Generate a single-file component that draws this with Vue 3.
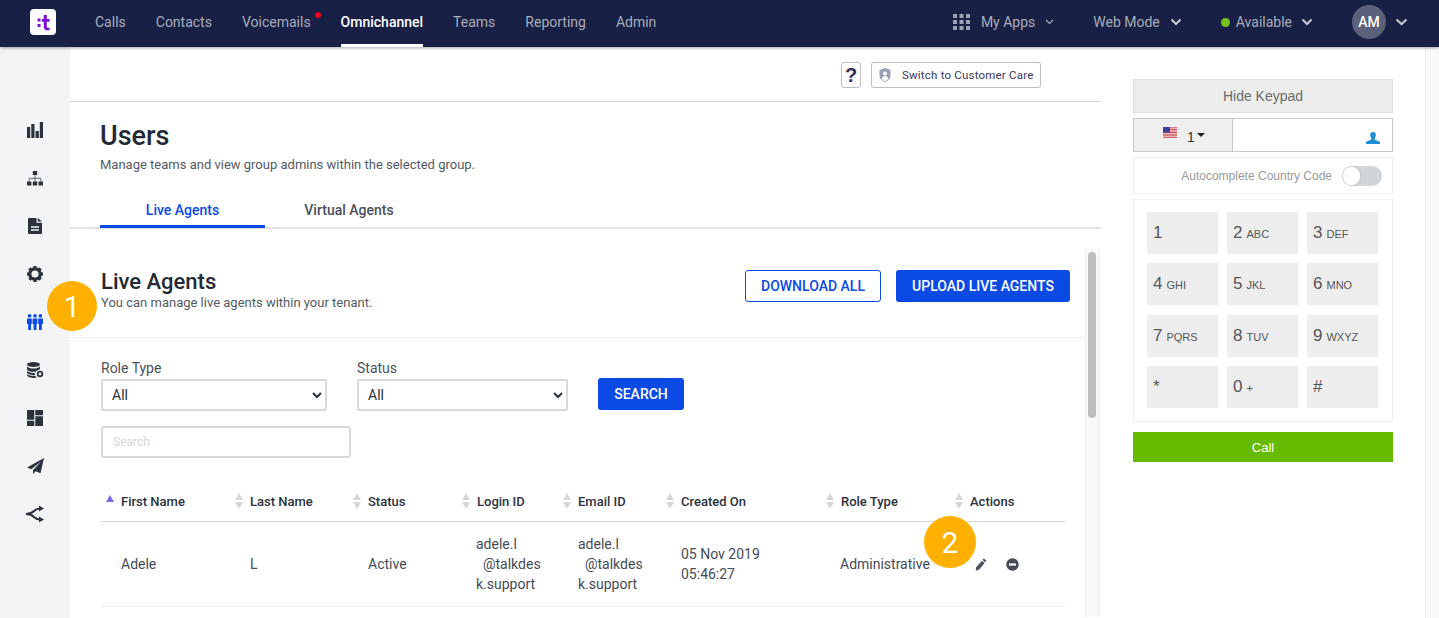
<script setup>
const navLeft = [
  { label: 'Calls' },
  { label: 'Contacts' },
  { label: 'Voicemails', dot: true },
  { label: 'Omnichannel', active: true },
  { label: 'Teams' },
  { label: 'Reporting' },
  { label: 'Admin' },
]
const keys = [
  ['1', ''], ['2', 'ABC'], ['3', 'DEF'],
  ['4', 'GHI'], ['5', 'JKL'], ['6', 'MNO'],
  ['7', 'PQRS'], ['8', 'TUV'], ['9', 'WXYZ'],
  ['*', ''], ['0', '+'], ['#', ''],
]
const columns = [
  { label: 'First Name', w: 134, active: true },
  { label: 'Last Name', w: 118 },
  { label: 'Status', w: 109 },
  { label: 'Login ID', w: 101 },
  { label: 'Email ID', w: 103 },
  { label: 'Created On', w: 160 },
  { label: 'Role Type', w: 129 },
  { label: 'Actions', w: 110 },
]
const gearTeeth = [0, 45, 90, 135, 180, 225, 270, 315]
</script>

<template>
  <div class="page">
    <header class="topbar">
      <svg class="logo" width="26" height="26" viewBox="0 0 26 26">
        <rect width="26" height="26" rx="4" fill="#fff"/>
        <rect x="7.500" y="9.500" width="3" height="3" fill="#7a10d8"/>
        <rect x="7.500" y="15" width="3" height="3" fill="#7a10d8"/>
        <path d="M13.800 6h3v4h2.800v2.700h-2.800v5.100c0 .9.500 1.100 2.800 1V21.300c-3.900.3-5.800-.4-5.800-3.300v-5.300H12V10h1.800z" fill="#7a10d8"/>
      </svg>
      <nav class="nav">
        <a v-for="n in navLeft" :key="n.label" class="nav-item" :class="{ active: n.active }">
          {{ n.label }}<i v-if="n.dot" class="red-dot"></i>
        </a>
      </nav>
      <div class="nav-right">
        <div class="apps">
          <svg class="grid-ico" width="17" height="16" viewBox="0 0 17 16" fill="#9ea3b3">
            <rect x="0" y="0" width="4" height="4"/><rect x="6.500" y="0" width="4" height="4"/><rect x="13" y="0" width="4" height="4"/>
            <rect x="0" y="6" width="4" height="4"/><rect x="6.500" y="6" width="4" height="4"/><rect x="13" y="6" width="4" height="4"/>
            <rect x="0" y="12" width="4" height="4"/><rect x="6.500" y="12" width="4" height="4"/><rect x="13" y="12" width="4" height="4"/>
          </svg>
          <span>My Apps</span>
          <svg class="chev-thin" width="9" height="6" viewBox="0 0 9 6"><path d="M1 1l3.500 3.500L8 1" fill="none" stroke="#a9adbb" stroke-width="1.200"/></svg>
        </div>
        <div class="mode">
          <span>Web Mode</span>
          <svg width="12" height="8" viewBox="0 0 12 8"><path d="M1.500 1.500L6 6l4.500-4.500" fill="none" stroke="#c4c7d0" stroke-width="2.200"/></svg>
        </div>
        <div class="avail">
          <i class="green-dot"></i><span>Available</span>
          <svg width="12" height="8" viewBox="0 0 12 8"><path d="M1.500 1.500L6 6l4.500-4.500" fill="none" stroke="#c4c7d0" stroke-width="2.200"/></svg>
        </div>
        <div class="avatar">AM</div>
        <svg class="av-chev" width="13" height="8" viewBox="0 0 13 8"><path d="M1.500 1.500L6.500 6l5-4.500" fill="none" stroke="#c4c7d0" stroke-width="2.200"/></svg>
      </div>
    </header>

    <div class="body">
      <aside class="sidebar">
        <svg width="16" height="16" viewBox="0 0 16 16" fill="#2b323c"><rect x="0" y="5" width="3.200" height="11"/><rect x="4.300" y="2" width="3.200" height="14"/><rect x="8.600" y="9" width="3.200" height="7"/><rect x="12.800" y="0" width="3.200" height="16"/></svg>
        <svg width="16" height="15" viewBox="0 0 16 15"><rect x="5.800" y="0" width="4.400" height="4" fill="#2b323c"/><rect x="0" y="10.500" width="4.400" height="4" fill="#2b323c"/><rect x="5.800" y="10.500" width="4.400" height="4" fill="#2b323c"/><rect x="11.600" y="10.500" width="4.400" height="4" fill="#2b323c"/><path d="M8 4v6.500M2.200 10.500V7.300h11.600v3.200" fill="none" stroke="#5f6670" stroke-width="1"/></svg>
        <svg width="14" height="16" viewBox="0 0 14 16"><path d="M0 1a1 1 0 0 1 1-1h7.500v4.800H14V15a1 1 0 0 1-1 1H1a1 1 0 0 1-1-1z" fill="#2b323c"/><path d="M9.700 0L14 3.600H9.700z" fill="#2b323c"/><path d="M3 9h8M3 12h8" stroke="#f3f4f6" stroke-width="1.300"/></svg>
        <svg width="16" height="16" viewBox="0 0 16 16" fill="#2b323c">
          <circle cx="8" cy="8" r="5.200" fill="none" stroke="#2b323c" stroke-width="3.200"/>
          <rect v-for="a in gearTeeth" :key="a" x="6.400" y="0" width="3.200" height="3" :transform="`rotate(${a} 8 8)`"/>
        </svg>
        <svg width="16" height="16" viewBox="0 0 16 16" fill="#0b4ae4"><circle cx="2.600" cy="1.900" r="1.800"/><circle cx="8" cy="1.900" r="1.800"/><circle cx="13.400" cy="1.900" r="1.800"/><path d="M0 4.500h4.800v5.500L4 10v6H1.200V10L0 10zM5.600 4.500h4.800V10H9.500v6H6.500V10H5.600zM11.200 4.500H16V10l-1.200 0V16H12V10h-.8z"/></svg>
        <svg width="17" height="16" viewBox="0 0 17 16"><ellipse cx="6.500" cy="2.500" rx="6.500" ry="2.500" fill="#2b323c"/><path d="M0 4.200C1 6 3.500 6.500 6.500 6.500S12 6 13 4.200V7c-1 1-1.800 1.200-3 1.400L8.500 9.700C4 10 1 9 0 7.700zM0 9c1.500 1.400 4.200 2 7.500 1.900L8 13c-4 .4-7-.6-8-2.200zM0 12.200c1.500 1.300 4.500 1.800 8.300 1.600L9.500 15.800C5 16.300 1 15.300 0 13.800z" fill="#2b323c"/><circle cx="13" cy="12" r="2.300" fill="none" stroke="#2b323c" stroke-width="1.800"/></svg>
        <svg width="16" height="16" viewBox="0 0 16 16" fill="#2b323c"><rect x="0" y="0" width="7.300" height="9.800" rx="0.600"/><rect x="0" y="10.800" width="7.300" height="5.200" rx="0.600"/><rect x="8.300" y="0" width="7.700" height="5.200" rx="0.600"/><rect x="8.300" y="6.200" width="7.700" height="9.800" rx="0.600"/></svg>
        <svg width="17" height="16" viewBox="0 0 17 16" fill="#2b323c"><path d="M17 0L0 9.500l4.300 1.800L14 3.500 6 12.300V16l2.700-2.800 4.800 2z"/></svg>
        <svg width="18" height="18" viewBox="0 0 18 18"><path d="M0 9C4 9 6 8 8 6 9.500 4.500 11 3.500 14 3.500M0 9C4 9 6 10 8 12 9.500 13.500 11 14.500 14 14.500" fill="none" stroke="#2b323c" stroke-width="2"/><path d="M13 0.500L18 3.500 13 6.500zM13 11.500L18 14.500 13 17.500z" fill="#2b323c"/></svg>
      </aside>

      <main class="main">
        <div class="toolbar">
          <button class="help">?</button>
          <button class="switch">
            <svg width="12" height="14" viewBox="0 0 12 14"><path d="M6 0l5.500 2v5.500C11.500 10.500 9 13 6 14 3 13 .5 10.500.5 7.500V2z" fill="#9aa0b4"/><circle cx="6" cy="5.500" r="2" fill="#fff"/><path d="M2.800 11c.3-2 1.500-3 3.200-3s2.900 1 3.200 3c-1 1.200-2 1.800-3.200 2.200C4.800 12.800 3.800 12.200 2.800 11z" fill="#fff"/></svg>
            <span>Switch to Customer Care</span>
          </button>
        </div>

        <div class="heading">
          <h1>Users</h1>
          <p>Manage teams and view group admins within the selected group.</p>
        </div>

        <div class="tabs">
          <div class="tab on">Live Agents</div>
          <div class="tab">Virtual Agents</div>
        </div>

        <div class="scrollarea">
          <div class="content">
            <div class="section-head">
              <div class="sh-text">
                <h2>Live Agents</h2>
                <p>You can manage live agents within your tenant.</p>
              </div>
              <div class="sh-actions">
                <button class="btn-outline">DOWNLOAD ALL</button>
                <button class="btn-solid">UPLOAD LIVE AGENTS</button>
              </div>
            </div>

            <div class="filters">
              <div class="filter-row">
                <label class="field f1">
                  <span>Role Type</span>
                  <select><option>All</option></select>
                </label>
                <label class="field f2">
                  <span>Status</span>
                  <select><option>All</option></select>
                </label>
                <button class="btn-search">SEARCH</button>
              </div>
              <input class="search" placeholder="Search" />
            </div>

            <div class="table">
              <div class="thead">
                <div v-for="c in columns" :key="c.label" class="th" :style="{ width: c.w + 'px' }">
                  <span class="sort" :class="{ on: c.active }"><i class="up"></i><i v-if="!c.active" class="down"></i></span>
                  <span>{{ c.label }}</span>
                </div>
              </div>
              <div class="tr">
                <div class="td first" :style="{ width: columns[0].w + 'px' }">Adele</div>
                <div class="td" :style="{ width: columns[1].w + 'px' }">L</div>
                <div class="td" :style="{ width: columns[2].w + 'px' }">Active</div>
                <div class="td wrap" :style="{ width: columns[3].w + 'px' }">adele.l<br>&nbsp;&nbsp;@talkdes<br>k.support</div>
                <div class="td wrap" :style="{ width: columns[4].w + 'px' }">adele.l<br>&nbsp;&nbsp;@talkdes<br>k.support</div>
                <div class="td" :style="{ width: columns[5].w + 'px' }">05 Nov 2019<br>05:46:27</div>
                <div class="td" :style="{ width: columns[6].w + 'px' }">Administrative</div>
                <div class="td acts" :style="{ width: columns[7].w + 'px' }">
                  <svg width="12" height="13" viewBox="0 0 12 13" fill="#4a505b"><path d="M8.800 0.500l2.700 2.200-1.300 1.600-2.700-2.200zM6.900 2.900l2.700 2.200-5.400 6.500-3.400 1.100.3-3.400z"/></svg>
                  <svg width="13" height="13" viewBox="0 0 13 13"><circle cx="6.500" cy="6.500" r="6.200" fill="#454c58"/><rect x="3" y="5.400" width="7" height="2.200" fill="#fff"/></svg>
                </div>
              </div>
            </div>
          </div>
          <div class="scrolltrack"><div class="thumb"></div></div>
        </div>

        <div class="badge b1">1</div>
        <div class="badge b2">2</div>
      </main>

      <aside class="dialer">
        <button class="hide">Hide Keypad</button>
        <div class="phone">
          <div class="cc">
            <svg class="flag" width="14" height="11" viewBox="0 0 14 11">
              <rect width="14" height="11" fill="#fff"/>
              <path d="M0 .8h14M0 2.400h14M0 4h14M0 5.600h14M0 7.200h14M0 8.800h14M0 10.400h14" stroke="#c8313e" stroke-width="0.900"/>
              <rect width="7" height="5.600" fill="#3a3f9b"/>
            </svg>
            <span class="cc-n">1</span><i class="caret"></i>
          </div>
          <div class="num">
            <svg width="14" height="12" viewBox="0 0 14 12" fill="#1b8fd6"><path d="M7 0c1.800 0 2.800 1.200 2.800 3S8.800 6.300 8.500 7.200c0 .8 4.500 1.500 5.500 3V12H0v-1.800c1-1.500 5.500-2.200 5.500-3C5.200 6.300 4.200 4.800 4.200 3S5.200 0 7 0z"/></svg>
          </div>
        </div>
        <div class="auto">
          <span>Autocomplete Country Code</span>
          <div class="toggle"><i></i></div>
        </div>
        <div class="pad">
          <div v-for="k in keys" :key="k[0]" class="key">
            <span class="kn">{{ k[0] }}</span><span class="kl">{{ k[1] }}</span>
          </div>
        </div>
        <button class="call">Call</button>
      </aside>
      <div class="edge"></div>
    </div>
  </div>
</template>

<style>
html, body { margin: 0; height: 100%; overflow: hidden; background: #fff; }
</style>

<style scoped>
.page { width: 1439px; height: 618px; overflow: hidden; font-family: Roboto, "Liberation Sans", sans-serif; color: #2b323c; display: flex; flex-direction: column; }
.topbar { height: 47px; background: #182045; display: flex; align-items: stretch; flex: none; box-shadow: 0 1px 3px rgba(0,0,0,.35); position: relative; z-index: 2; }
.logo { margin: 9px 0 0 30px; flex: none; }
.nav { display: flex; margin-left: 39px; gap: 30px; }
.nav-item { position: relative; font-size: 14px; line-height: 44px; color: #a9adba; }
.nav-item.active { color: #fff; font-weight: 500; border-bottom: 3px solid #fff; height: 44px; }
.red-dot { position: absolute; width: 6px; height: 6px; border-radius: 50%; background: #f0001e; top: 12px; right: -10px; }
.nav-right { margin-left: auto; display: flex; align-items: center; font-size: 14px; color: #a9adba; padding-bottom: 3px; box-sizing: border-box; }
.apps { display: flex; align-items: center; }
.grid-ico { margin-right: 11px; }
.chev-thin { margin-left: 10px; }
.mode { display: flex; align-items: center; gap: 10px; margin-left: 39px; }
.avail { display: flex; align-items: center; margin-left: 39px; }
.avail svg { margin-left: 9px; }
.green-dot { width: 9px; height: 9px; background: #78c21e; border-radius: 50%; margin-right: 6px; }
.avatar { width: 34px; height: 34px; border-radius: 50%; background: #5a6178; color: #fff; font-size: 14px; font-weight: 500; text-align: center; line-height: 34px; margin-left: 39px; }
.av-chev { margin: 0 31px 0 9px; }

.body { flex: 1; display: flex; min-height: 0; position: relative; }
.sidebar { width: 70px; flex: none; background: #f3f4f6; display: grid; grid-auto-rows: 48px; justify-items: center; align-items: center; align-content: start; padding-top: 59px; box-sizing: border-box; }

.main { width: 1031px; flex: none; position: relative; background: #fff; }
.toolbar { height: 39px; border-bottom: 1px solid #d4d5d7; display: flex; justify-content: flex-end; align-items: flex-start; padding: 15px 60px 0 0; }
.help { width: 20px; height: 26px; border: 1px solid #bcbec4; border-radius: 3px; background: #fff; padding: 0; font: 700 20px/24px "Liberation Sans", sans-serif; color: #2f2c55; margin-right: 10px; }
.switch { height: 26px; width: 170px; border: 1px solid #bcbec4; border-radius: 3px; background: #fff; display: flex; align-items: center; padding: 0 0 0 7px; font: 400 11.500px Roboto, sans-serif; color: #3b3760; letter-spacing: .2px; white-space: nowrap; }
.switch span { margin-left: 11px; }
.heading { padding: 19px 0 0 30px; height: 64px; }
.heading h1 { margin: 0; font-size: 27px; font-weight: 500; line-height: 30px; color: #232a35; }
.heading p { margin: 5px 0 0; font-size: 13px; line-height: 18px; color: #545a65; }
.tabs { display: flex; padding-left: 30px; height: 44px; box-sizing: border-box; border-bottom: 2px solid #e2e3e5; margin-bottom: -1px; }
.tab { font-size: 14px; font-weight: 500; color: #4a505b; line-height: 50px; width: 168px; text-align: center; }
.tab.on { width: 165px; color: #0b4ae4; height: 43px; box-sizing: border-box; border-bottom: 3px solid #0b4ae4; }

.scrollarea { display: flex; height: 389px; overflow: hidden; }
.content { width: 1015px; flex: none; }
.scrolltrack { width: 15px; margin-top: 21px; border-left: 1px solid #ececec; border-right: 1px solid #ececec; background: #f9f9f9; box-sizing: border-box; }
.thumb { width: 8px; height: 166px; background: #bdbdbd; border-radius: 4px; margin: 3px 0 0 2px; }
.section-head { display: flex; justify-content: space-between; height: 110px; box-sizing: border-box; border-bottom: 1px solid #ececec; padding: 42px 15px 0 31px; }
.sh-text h2 { margin: 0; font-size: 22px; font-weight: 500; line-height: 24px; color: #232a35; }
.sh-text p { margin: 1px 0 0; font-size: 13px; line-height: 16px; color: #545a65; }
.sh-actions { display: flex; gap: 15px; }
.btn-outline, .btn-solid, .btn-search { font: 500 14px Roboto, sans-serif; height: 32px; border-radius: 3px; box-sizing: border-box; }
.btn-outline { width: 136px; background: #fff; border: 1px solid #0b4ae4; color: #0b4ae4; }
.btn-solid { width: 174px; background: #0b4ae4; border: 0; color: #fff; }
.filters { padding: 19px 0 0 31px; }
.filter-row { display: flex; align-items: flex-start; }
.field { display: flex; flex-direction: column; }
.field span { font-size: 14px; line-height: 20px; color: #4a505b; height: 21px; margin-top: 1px; }
.field select { height: 32px; box-sizing: border-box; border: 2px solid #d9d9d9; border-radius: 2px; background: #fff; font: 14px Roboto, sans-serif; color: #2b323c; padding: 0 5px; }
.f1 { width: 226px; margin-right: 30px; }
.f2 { width: 211px; margin-right: 30px; }
.btn-search { width: 86px; background: #0b4ae4; border: 0; color: #fff; margin-top: 21px; }
.search { display: block; width: 250px; height: 32px; box-sizing: border-box; border: 2px solid #d9d9d9; border-radius: 3px; margin-top: 15px; padding: 0 10px; font: 12px Roboto, sans-serif; outline: none; }
.search::placeholder { color: #d5d5d5; }
.table { margin: 25px 0 0 31px; width: 964px; }
.thead { display: flex; height: 38px; border-bottom: 1px solid #d7d8da; }
.th { display: flex; align-items: center; font-size: 13px; font-weight: 500; color: #2b323c; height: 38px; box-sizing: border-box; white-space: nowrap; padding-bottom: 2px; }
.th:first-child { padding-left: 5px; }
.sort { display: flex; flex-direction: column; width: 15px; flex: none; gap: 2px; }
.up { width: 0; height: 0; border-left: 4px solid transparent; border-right: 4px solid transparent; border-bottom: 7px solid #d6d7d9; }
.down { width: 0; height: 0; border-left: 4px solid transparent; border-right: 4px solid transparent; border-top: 7px solid #d6d7d9; }
.sort.on .up { border-bottom-color: #7b68e6; margin-top: -6px; border-left-width: 4.500px; border-right-width: 4.500px; }
.tr { display: flex; height: 84px; border-bottom: 1px solid #ececec; align-items: center; font-size: 14px; color: #454b56; }
.td { line-height: 20px; box-sizing: border-box; padding-left: 15px; white-space: nowrap; }
.td.first { padding-left: 20px; }
.td:nth-child(4), .td:nth-child(7) { padding-left: 14px; }
.acts { display: flex; align-items: center; gap: 19px; padding-left: 20px; }

.badge { position: absolute; border-radius: 50%; background: #ffb000; color: #fff; font: 400 30px Roboto, sans-serif; display: flex; align-items: center; justify-content: center; z-index: 3; }
.b1 { width: 50px; height: 50px; left: -23px; top: 234px; }
.b2 { width: 52px; height: 52px; left: 854px; top: 469px; }

.dialer { width: 260px; flex: none; margin: 32px 0 0 32px; font-family: "Liberation Sans", Arial, sans-serif; }
.hide { display: block; width: 100%; height: 34px; background: #ededed; border: 1px solid #dedede; color: #6b6b6b; font: 14px "Liberation Sans", sans-serif; padding: 0; }
.phone { display: flex; height: 34px; margin-top: 5px; border: 1px solid #c9c9c9; box-sizing: border-box; }
.cc { width: 99px; background: #efefef; border-right: 1px solid #c9c9c9; position: relative; box-sizing: border-box; }
.flag { position: absolute; left: 29px; top: 8px; }
.cc-n { font-size: 14px; color: #333; position: absolute; left: 53px; top: 10px; }
.caret { position: absolute; left: 63px; top: 14px; width: 0; height: 0; border-left: 4px solid transparent; border-right: 4px solid transparent; border-top: 4px solid #222; }
.num { flex: 1; display: flex; justify-content: flex-end; align-items: center; padding: 6px 12px 0 0; background: #fff; }
.auto { height: 37px; margin-top: 5px; border: 1px solid #efefef; box-sizing: border-box; display: flex; align-items: center; justify-content: flex-end; padding-right: 10px; font-size: 12px; color: #9a9a9a; }
.toggle { width: 40px; height: 20px; border-radius: 10px; background: #d0d5d9; margin-left: 10px; position: relative; }
.toggle i { position: absolute; left: 1px; top: 1px; width: 17px; height: 18px; background: #fff; border-radius: 8px; box-shadow: 0 0 2px rgba(0,0,0,.2); }
.pad { margin-top: 5px; border: 1px solid #efefef; box-sizing: border-box; height: 223px; padding: 12px 13px; display: grid; grid-template-columns: repeat(3, 71px); column-gap: 9px; grid-auto-rows: 42px; row-gap: 9.400px; }
.key { background: #ededed; padding: 11px 6px 0; box-sizing: border-box; color: #555; white-space: nowrap; }
.kn { font-size: 17px; line-height: 20px; }
.kl { font-size: 11px; margin-left: 4px; }
.call { display: block; width: 100%; height: 30px; margin-top: 10px; border: 0; background: #66bb00; color: #fff; font: 13px "Liberation Sans", sans-serif; padding: 0; }
.edge { position: absolute; left: 1425px; top: 0; bottom: 0; width: 14px; background: #fafafa; border-left: 1px solid #ececec; box-sizing: border-box; }
</style>
